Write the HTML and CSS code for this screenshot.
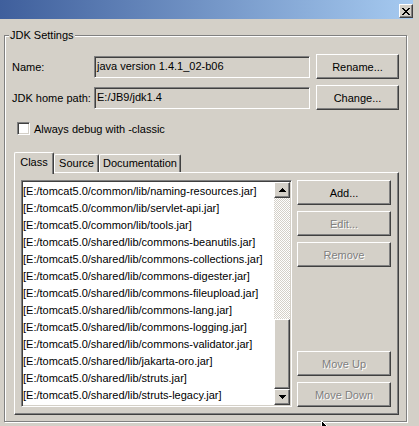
FILE: index.html
```html
<!DOCTYPE html>
<html lang="en">
<head>
<meta charset="UTF-8">
<meta name="viewport" content="width=device-width, initial-scale=1.0">
<title>JDK Settings</title>
<link rel="stylesheet" href="styles.css">
</head>
<body>
    <div class="window">
        <div class="titlebar">
            <button type="button" class="close-btn" aria-label="Close">
                <svg width="8" height="7" viewBox="0 0 8 7"><path d="M0 0h2v1H0z M6 0h2v1H6z M1 1h2v1H1z M5 1h2v1H5z M2 2h4v1H2z M3 3h2v1H3z M2 4h4v1H2z M1 5h2v1H1z M5 5h2v1H5z M0 6h2v1H0z M6 6h2v1H6z" fill="#000"/></svg>
            </button>
        </div>

        <div class="group">
            <div class="group-title">JDK Settings</div>

            <div class="field-row">
                <span class="field-label">Name:</span>
                <div class="field">java version 1.4.1_02-b06</div>
                <button type="button" class="btn btn-side">Rename...</button>
            </div>
            <div class="field-row second">
                <span class="field-label">JDK home path:</span>
                <div class="field">E:/JB9/jdk1.4</div>
                <button type="button" class="btn btn-side">Change...</button>
            </div>

            <label class="check-row">
                <span class="checkbox"></span>
                Always debug with -classic
            </label>

            <div class="tabs">
                <div class="tab active tab-class">Class</div>
                <div class="tab tab-source">Source</div>
                <div class="tab tab-docs">Documentation</div>
            </div>

            <div class="tab-panel">
                <div class="listbox">
                    <ul class="list-items">
                        <li>[E:/tomcat5.0/common/lib/naming-resources.jar]</li>
                        <li>[E:/tomcat5.0/common/lib/servlet-api.jar]</li>
                        <li>[E:/tomcat5.0/common/lib/tools.jar]</li>
                        <li>[E:/tomcat5.0/shared/lib/commons-beanutils.jar]</li>
                        <li>[E:/tomcat5.0/shared/lib/commons-collections.jar]</li>
                        <li>[E:/tomcat5.0/shared/lib/commons-digester.jar]</li>
                        <li>[E:/tomcat5.0/shared/lib/commons-fileupload.jar]</li>
                        <li>[E:/tomcat5.0/shared/lib/commons-lang.jar]</li>
                        <li>[E:/tomcat5.0/shared/lib/commons-logging.jar]</li>
                        <li>[E:/tomcat5.0/shared/lib/commons-validator.jar]</li>
                        <li>[E:/tomcat5.0/shared/lib/jakarta-oro.jar]</li>
                        <li>[E:/tomcat5.0/shared/lib/struts.jar]</li>
                        <li>[E:/tomcat5.0/shared/lib/struts-legacy.jar]</li>
                    </ul>
                    <div class="scrollbar">
                        <div class="scroll-btn">
                            <svg width="7" height="4" viewBox="0 0 7 4"><path d="M3 0h1v1H3z M2 1h3v1H2z M1 2h5v1H1z M0 3h7v1H0z" fill="#000"/></svg>
                        </div>
                        <div class="scroll-track"></div>
                        <div class="scroll-thumb"></div>
                        <div class="scroll-btn">
                            <svg width="7" height="4" viewBox="0 0 7 4"><path d="M0 0h7v1H0z M1 1h5v1H1z M2 2h3v1H2z M3 3h1v1H3z" fill="#000"/></svg>
                        </div>
                    </div>
                </div>

                <div class="side-buttons">
                    <button type="button" class="btn">Add...</button>
                    <button type="button" class="btn" disabled>Edit...</button>
                    <button type="button" class="btn" disabled>Remove</button>
                    <button type="button" class="btn move-up" disabled>Move Up</button>
                    <button type="button" class="btn" disabled>Move Down</button>
                </div>
            </div>
        </div>

        <!-- mouse pointer resting near the bottom edge -->
        <svg class="pointer" width="12" height="19" viewBox="0 0 12 19">
            <path d="M0.5 0.5 V16.5 L4.5 12.5 L7.5 18.5 L9.5 17.5 L6.5 11.5 H11.5 Z" fill="#000" stroke="#fff" stroke-width="1"/>
        </svg>
    </div>
</body>
</html>
```

FILE: styles.css
```css
body {
    margin: 0;
    background-color: #d4d0c8;
    font-family: "Liberation Sans", Arial, sans-serif;
    font-size: 11px;
    color: #000;
}

.window {
    position: relative;
    width: 419px;
    height: 426px;
    overflow: hidden;
}

/* title bar */
.titlebar {
    width: 413px;
    height: 19px;
    display: flex;
    justify-content: flex-end;
    align-items: flex-start;
    background: linear-gradient(to right, #3f5f9c, #a6caf0);
}

.close-btn {
    width: 14px;
    height: 14px;
    margin-top: 4px;
    padding: 0;
    display: flex;
    align-items: center;
    justify-content: center;
    background-color: #d4d0c8;
    border: 1px solid;
    border-color: #fff #404040 #404040 #fff;
    box-shadow: inset -1px -1px 0 #808080;
}

/* etched group box */
.group {
    width: 403px;
    height: 387px;
    margin: 16px 0 0 4px;
    box-sizing: border-box;
    border: 1px solid #808080;
    box-shadow: inset 1px 1px 0 #fff, 1px 1px 0 #fff;
}

.group-title {
    width: fit-content;
    margin: -7px 0 0 4px;
    padding: 0 1px;
    line-height: 13px;
    background-color: #d4d0c8;
}

.field-row {
    display: flex;
    align-items: center;
    height: 25px;
    margin-top: 12px;
    padding-left: 7px;
}

.field-row.second {
    margin-top: 6px;
}

.field-label {
    width: 82px;
}

.field {
    width: 216px;
    height: 22px;
    margin-right: 6px;
    padding-left: 2px;
    box-sizing: border-box;
    line-height: 18px;
    white-space: nowrap;
    border: 1px solid;
    border-color: #808080 #fff #fff #808080;
    box-shadow: inset 1px 1px 0 #404040, inset -1px -1px 0 #d4d0c8;
}

/* raised push buttons */
.btn {
    height: 25px;
    padding: 0;
    font: inherit;
    color: #000;
    background-color: #d4d0c8;
    border: 1px solid;
    border-color: #fff #404040 #404040 #fff;
    box-shadow: inset -1px -1px 0 #808080;
}

.btn:disabled {
    color: #808080;
    text-shadow: 1px 1px 0 #fff;
}

.btn-side {
    width: 83px;
}

.check-row {
    display: flex;
    align-items: center;
    gap: 4px;
    height: 13px;
    margin-top: 12px;
    padding-left: 12px;
}

.checkbox {
    width: 13px;
    height: 13px;
    box-sizing: border-box;
    background-color: #fff;
    border: 1px solid;
    border-color: #808080 #fff #fff #808080;
    box-shadow: inset 1px 1px 0 #404040, inset -1px -1px 0 #d4d0c8;
}

/* tab strip */
.tabs {
    display: flex;
    align-items: flex-end;
    height: 20px;
    margin-top: 17px;
    padding-left: 9px;
}

.tab {
    height: 18px;
    box-sizing: border-box;
    line-height: 17px;
    text-align: center;
    background-color: #d4d0c8;
    border: 1px solid;
    border-bottom: none;
    border-color: #fff #404040 #fff #fff;
    border-radius: 2px 2px 0 0;
    box-shadow: inset -1px 0 0 #808080;
}

.tab.active {
    position: relative;
    z-index: 1;
    height: 22px;
    margin-bottom: -2px;
    line-height: 19px;
}

.tab-class { width: 40px; }
.tab-source { width: 45px; }
.tab-docs { width: 82px; }

.tab-panel {
    width: 385px;
    height: 243px;
    margin-left: 9px;
    padding: 7px 0 0 6px;
    box-sizing: border-box;
    display: flex;
    gap: 5px;
    border: 1px solid;
    border-color: #fff #404040 #404040 #fff;
    box-shadow: inset -1px -1px 0 #808080;
}

/* class path list */
.listbox {
    width: 271px;
    height: 227px;
    box-sizing: border-box;
    display: flex;
    background-color: #fff;
    border: 1px solid;
    border-color: #808080 #fff #fff #808080;
    box-shadow: inset 1px 1px 0 #404040, inset -1px -1px 0 #d4d0c8;
}

.list-items {
    flex: 1;
    margin: 0;
    padding: 2px 0 0 1px;
    list-style: none;
    overflow: hidden;
    white-space: nowrap;
}

.list-items li {
    height: 17px;
    line-height: 17px;
}

.scrollbar {
    width: 16px;
    margin: 1px 1px 1px 0;
    display: flex;
    flex-direction: column;
}

.scroll-btn,
.scroll-thumb {
    box-sizing: border-box;
    background-color: #d4d0c8;
    border: 1px solid;
    border-color: #fff #404040 #404040 #fff;
    box-shadow: inset -1px -1px 0 #808080;
}

.scroll-btn {
    height: 16px;
    display: flex;
    align-items: center;
    justify-content: center;
}

.scroll-track {
    flex: 1;
    background: repeating-conic-gradient(#fff 0 25%, #d4d0c8 0 50%) 0 0 / 2px 2px;
}

.scroll-thumb {
    height: 70px;
}

.side-buttons {
    width: 94px;
    height: 227px;
    display: flex;
    flex-direction: column;
    gap: 6px;
}

.side-buttons .btn {
    width: 94px;
}

.move-up {
    margin-top: auto;
}

.pointer {
    position: absolute;
    left: 321px;
    top: 420px;
}
```
